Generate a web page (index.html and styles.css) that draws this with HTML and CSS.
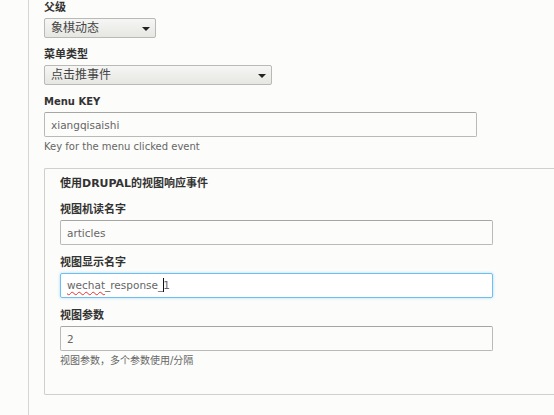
FILE: index.html
```html
<!DOCTYPE html>
<html lang="zh-CN">
<head>
  <meta charset="UTF-8">
  <title>菜单项编辑</title>
  <link rel="stylesheet" href="styles.css">
</head>
<body>
  <div class="page">

    <div class="form-item">
      <label for="parent">父级</label>
      <div class="select-wrap">
        <select id="parent" class="select-short">
          <option>象棋动态</option>
        </select>
      </div>
    </div>

    <div class="form-item">
      <label for="menu-type">菜单类型</label>
      <div class="select-wrap">
        <select id="menu-type" class="select-long">
          <option>点击推事件</option>
        </select>
      </div>
    </div>

    <div class="form-item">
      <label class="latin" for="menu-key">Menu KEY</label>
      <input id="menu-key" class="form-text" type="text" value="xiangqisaishi">
      <div class="description">Key for the menu clicked event</div>
    </div>

    <!-- Drupal view response -->
    <fieldset class="fieldset">
      <div class="fieldset-title">使用DRUPAL的视图响应事件</div>

      <div class="form-item">
        <label for="view-name">视图机读名字</label>
        <input id="view-name" class="form-text" type="text" value="articles">
      </div>

      <div class="form-item">
        <label>视图显示名字</label>
        <div class="form-text is-focused"><span class="misspelt">wechat</span>_response_<span class="caret"></span>1</div>
      </div>

      <div class="form-item">
        <label for="view-args">视图参数</label>
        <input id="view-args" class="form-text" type="text" value="2">
        <div class="description">视图参数，多个参数使用/分隔</div>
      </div>
    </fieldset>

  </div>
</body>
</html>
```

FILE: styles.css
```css
* {
  box-sizing: border-box;
}
html, body {
  margin: 0;
}
body {
  font-family: "DejaVu Sans", "Noto Sans CJK SC", sans-serif;
  font-size: 10px;
  color: #333;
  background: #fcfcfa;
  overflow: hidden;
}
.page {
  margin-left: 28px;
  border-left: 1px solid #d6d6d4;
  padding-left: 15px;
  min-height: 100vh;
}
.form-item {
  margin-bottom: 9px;
}
.form-item label {
  display: block;
  font-weight: bold;
  font-size: 11px;
  line-height: 16px;
  margin-bottom: 2px;
}
.form-item label.latin {
  font-size: 10px;
}
.select-wrap {
  position: relative;
  display: inline-block;
  vertical-align: top;
}
.select-wrap::after {
  content: "";
  position: absolute;
  right: 6px;
  top: 9px;
  border-left: 4px solid transparent;
  border-right: 4px solid transparent;
  border-top: 4px solid #222;
  pointer-events: none;
}
select {
  display: block;
  appearance: none;
  -webkit-appearance: none;
  height: 20px;
  margin: 0;
  padding: 0 20px 0 6px;
  border: 1px solid #b9b9b7;
  border-radius: 2px;
  background: linear-gradient(#f6f6f4, #e6e6e3);
  font-family: inherit;
  font-size: 12px;
  color: #444;
}
.select-short {
  width: 112px;
}
.select-long {
  width: 228px;
}
.form-text {
  display: block;
  width: 433px;
  height: 25px;
  margin: 0;
  padding: 0 6px;
  border: 1px solid #b9b9b7;
  border-top-color: #a6a6a4;
  border-radius: 2px;
  background: #fcfcfa;
  font-family: inherit;
  font-size: 10.5px;
  line-height: 23px;
  color: #666;
  outline: none;
}
.form-text.is-focused {
  background: #fff;
  border-color: #6fc0f2;
  box-shadow: 0 0 3px #a8d8f6;
}
.misspelt {
  text-decoration: underline wavy #e8312f;
  text-decoration-thickness: 1px;
  text-decoration-skip-ink: none;
  text-underline-offset: 2px;
}
.caret {
  display: inline-block;
  width: 1px;
  height: 14px;
  margin-right: -1px;
  vertical-align: -3px;
  background: #111;
}
.description {
  margin-top: 3px;
  font-size: 10px;
  line-height: 14px;
  color: #666;
}
.fieldset {
  margin: 14px 0 0;
  padding: 7px 16px 16px 15px;
  min-width: 0;
  border: 1px solid #cfcfcd;
  border-right: 0;
  border-radius: 2px 0 0 2px;
}
.fieldset-title {
  font-weight: bold;
  font-size: 11px;
  line-height: 16px;
  margin-bottom: 10px;
}
.fieldset .form-item {
  margin-bottom: 10px;
}
```
